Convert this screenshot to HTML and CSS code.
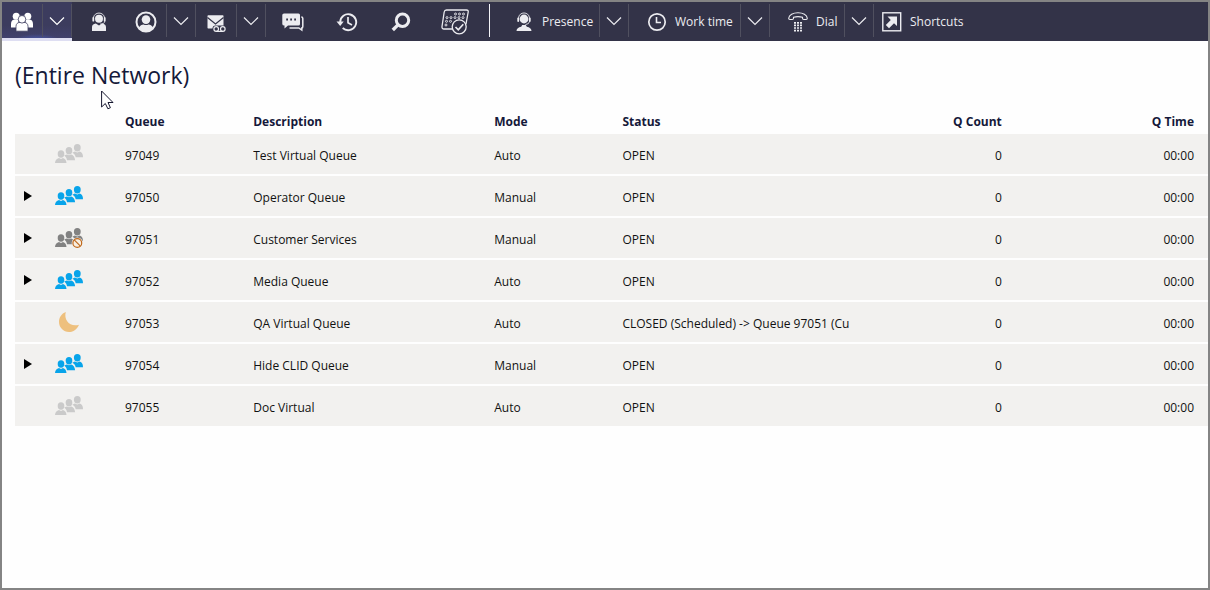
FILE: index.html
```html
<!DOCTYPE html>
<html lang="en">
<head>
<meta charset="utf-8">
<title>Queues</title>
<link rel="stylesheet" href="styles.css">
</head>
<body>
<svg class="sprite" aria-hidden="true">
  <symbol id="chevron" viewBox="0 0 16 10"><path d="M1 1.500L8 8.500L15 1.500" fill="none" stroke="currentColor" stroke-width="1.200"/></symbol>
  <symbol id="group" viewBox="0 0 28 20">
    <g fill="currentColor">
      <ellipse cx="6" cy="10" rx="3.300" ry="3.700"/><path d="M0 19c.1-2.800 1.600-4.300 4-5l2 .9 2-.9c2.200.7 3.300 2.200 3.500 5z"/>
      <ellipse cx="14" cy="6.700" rx="3.300" ry="3.700"/><path d="M9.200 11.500l2.600-1.100 2.200.9 2.200-.9c2.300.8 3.700 2.600 3.900 5.900h-8.100c-.3-2.200-1.200-3.700-2.800-4.800z"/>
      <ellipse cx="22.300" cy="3.700" rx="3.400" ry="3.700"/><path d="M17.300 8.700l2.500-1.200 2.500.9 2.400-.9c2.300.8 3.300 2.500 3.300 5.800h-7.300c-.4-2.100-1.500-3.700-3.400-4.600z"/>
    </g>
  </symbol>
  <symbol id="headset" viewBox="0 0 20 20">
    <g fill="currentColor"><circle cx="10" cy="6.800" r="4"/><path d="M3 19v-3.800c0-2.200 1.300-3.300 3.800-3.700L10 13.500l3.200-2c2.500.4 3.800 1.500 3.800 3.700V19z"/><rect x="3.400" y="5" width="1.800" height="4.600" rx=".9"/><rect x="14.800" y="5" width="1.800" height="4.600" rx=".9"/></g>
    <path d="M4.400 6C5-.6 15-.6 15.600 6v3.500c0 1.800-1.800 2.600-4.400 2.600" fill="none" stroke="currentColor" stroke-width=".9"/>
  </symbol>
</svg>

<div class="app">
  <nav class="toolbar" aria-label="Main">
    <div class="split active">
      <button class="tool narrow" aria-label="Queues"><svg class="icon22" viewBox="0 0 22 20"><g fill="currentColor"><circle cx="5.200" cy="4.200" r="3.500"/><circle cx="16.800" cy="4.200" r="3.500"/><path d="M0 15.500v-3.500C0 9 1.700 7.600 4 7.600h3.500v4L5 15.500zM22 15.500v-3.500c0-3-1.700-4.400-4-4.400h-3.500v4L17 15.500z"/></g><g fill="currentColor" stroke="#3c3c5e" stroke-width=".8"><path d="M5 19.200v-4.800c0-2.600 1.600-4 4-4h4c2.400 0 4 1.400 4 4v4.800z"/><circle cx="11" cy="7.300" r="3.800"/></g></svg></button>
      <button class="drop" aria-label="Queue options"><svg><use href="#chevron"/></svg></button>
    </div>
    <button class="tool" aria-label="Agents"><svg class="icon20"><use href="#headset"/></svg></button>
    <div class="split">
      <button class="tool narrow" aria-label="Contacts"><svg class="icon22" viewBox="0 0 22 22"><circle cx="11" cy="11" r="9.500" fill="none" stroke="currentColor" stroke-width="2"/><circle cx="11" cy="8.600" r="4.300" fill="currentColor"/><path d="M3.500 17c1.500-2.600 3.800-3.600 5-3.500 1.600.8 3.400.8 5 0 1.200-.1 3.500.9 5 3.500-4 4.600-11 4.600-15 0z" fill="currentColor"/></svg></button>
      <button class="drop" aria-label="Contact options"><svg><use href="#chevron"/></svg></button>
    </div>
    <div class="split">
      <button class="tool narrow" aria-label="Messages"><svg class="icon20" viewBox="0 0 20 20"><path d="M1.500 4q0-.7.7-.7h14.600q.7 0 .7.700v12.500H2.200q-.7 0-.7-.7z" fill="currentColor"/><path d="M1.500 5.500L9.500 12l8-6.500" fill="none" stroke="#333348" stroke-width="1.200"/><rect x="6.500" y="13.500" width="13.500" height="6.500" rx="3" fill="#333348"/><g fill="none" stroke="currentColor" stroke-width="1.200"><circle cx="10.200" cy="17" r="2.300"/><circle cx="16.800" cy="17" r="2.300"/><path d="M10 19.400h7"/></g></svg></button>
      <button class="drop" aria-label="Message options"><svg><use href="#chevron"/></svg></button>
    </div>
    <button class="tool" aria-label="Chat"><svg class="icon22" viewBox="0 0 22 20"><path d="M2 1.500h14.500q1.500 0 1.500 1.500v9q0 1.500-1.500 1.500H6L2.500 16.500v-3Q.3 13.500.3 12V3Q.3 1.500 2 1.500z" fill="currentColor"/><path d="M19.300 5q1.500 0 1.500 1.500v8q0 1.500-1 1.500v2l-3-2H7.500" fill="none" stroke="currentColor" stroke-width="1.500"/><path d="M4.200 6.500h1.800v2H4.200zM8.200 6.500H10v2H8.200zM12.200 6.500H14v2h-1.800z" fill="#333348"/></svg></button>
    <button class="tool" aria-label="History"><svg class="icon22" viewBox="0 0 22 22"><path d="M4.200 11a8 8 0 1 1 2.500 6" fill="none" stroke="currentColor" stroke-width="1.900"/><path d="M.5 10.500h7.200L4.200 15z" fill="currentColor"/><path d="M12 6v5.800l4 2.200" fill="none" stroke="currentColor" stroke-width="1.700"/></svg></button>
    <button class="tool" aria-label="Search"><svg class="icon20" viewBox="0 0 20 20"><circle cx="11.500" cy="8.200" r="6.200" fill="none" stroke="currentColor" stroke-width="3"/><path d="M7.200 12.600L1.800 18" stroke="currentColor" stroke-width="3.400"/></svg></button>
    <button class="tool" aria-label="Calendar"><svg class="icon28" viewBox="0 0 28 26"><g fill="none" stroke="currentColor" stroke-width="1.300"><path d="M11 20H3Q.8 20 1 17.500L3.200 3Q3.500 1 5.500 1H25.500Q27.500 1 27.200 3L25 15"/><circle cx="18.200" cy="17.800" r="7"/><path d="M14.500 18l2.800 2.800 5-5.500" stroke-width="1.700"/></g><g fill="none" stroke="currentColor" stroke-width=".9"><circle cx="14.500" cy="5" r="1"/><circle cx="18.500" cy="5" r="1"/><circle cx="22.500" cy="5" r="1"/><circle cx="6" cy="8.600" r="1"/><circle cx="10" cy="8.600" r="1"/><circle cx="14" cy="8.600" r="1"/><circle cx="18" cy="8.600" r="1"/><circle cx="22" cy="8.600" r="1"/><circle cx="5.500" cy="12.300" r="1"/><circle cx="9.500" cy="12.300" r="1"/><circle cx="5" cy="16" r="1"/></g></svg></button>
    <span class="rule"></span>
    <div class="split">
      <button class="tool text presence"><svg class="icon20" viewBox="0 0 20 20"><g fill="currentColor"><circle cx="10" cy="7" r="4.400"/><path d="M2.500 19c.2-2.500 1.800-3.500 4.700-4.200l1-1.800h3.600l1 1.800c2.900.7 4.500 1.700 4.700 4.200z"/><rect x="3.300" y="5.500" width="1.800" height="4.500" rx=".9"/><rect x="14.900" y="5.500" width="1.800" height="4.500" rx=".9"/></g><path d="M4.500 6C5-.7 15-.7 15.500 6v3.500q-.3 2.800-4 3" fill="none" stroke="currentColor" stroke-width=".9"/></svg>Presence</button>
      <button class="drop" aria-label="Presence options"><svg><use href="#chevron"/></svg></button>
    </div>
    <div class="split">
      <button class="tool text work"><svg class="icon20" viewBox="0 0 20 20"><circle cx="10" cy="10" r="8.200" fill="none" stroke="currentColor" stroke-width="1.700"/><path d="M9.500 5v5.500H14" fill="none" stroke="currentColor" stroke-width="1.600"/></svg>Work time</button>
      <button class="drop" aria-label="Work time options"><svg><use href="#chevron"/></svg></button>
    </div>
    <div class="split">
      <button class="tool text dial"><svg class="icon20" viewBox="0 0 20 20"><path d="M.7 6.300C1 3 5 .8 10 .8s9 2.200 9.300 5.500q0 1.200-1.200 1.200h-2.300q-1.300 0-1.300-1.200V5.200Q10 4 5.500 5.200v1.100q0 1.200-1.300 1.200H1.900Q.7 7.500.7 6.300z" fill="none" stroke="currentColor" stroke-width="1.100"/><path d="M6 10.800h2M9 10.800h2M12 10.800h2M6 13.400h2M9 13.400h2M12 13.400h2M6 16h2M9 16h2M12 16h2M6 18.600h2M9 18.600h2M12 18.600h2" stroke="currentColor" stroke-width="1.700"/></svg>Dial</button>
      <button class="drop" aria-label="Dial options"><svg><use href="#chevron"/></svg></button>
    </div>
    <button class="tool text shortcuts"><svg class="icon20" viewBox="0 0 20 20"><rect x=".8" y=".8" width="17.900" height="18" fill="none" stroke="currentColor" stroke-width="1.400"/><path d="M5.500 4.500H15V14l-3-2.800-5 5L3.800 13l5-5z" fill="currentColor"/></svg>Shortcuts</button>
  </nav>

  <main class="content">
    <h1>(Entire Network)</h1>
    <table class="queues">
      <colgroup><col class="c-expand"><col class="c-icon"><col class="c-queue"><col class="c-desc"><col class="c-mode"><col class="c-status"><col class="c-count"><col></colgroup>
      <thead><tr><th></th><th></th><th scope="col">Queue</th><th scope="col">Description</th><th scope="col">Mode</th><th scope="col">Status</th><th scope="col" class="num">Q Count</th><th scope="col" class="num last">Q Time</th></tr></thead>
      <tbody>
        <tr><td></td><td class="state"><svg class="people idle"><use href="#group"/></svg></td><td>97049</td><td>Test Virtual Queue</td><td>Auto</td><td>OPEN</td><td class="num">0</td><td class="num last">00:00</td></tr>
        <tr><td class="state"><button class="expand" aria-label="Expand 97050"></button></td><td class="state"><svg class="people"><use href="#group"/></svg></td><td>97050</td><td>Operator Queue</td><td>Manual</td><td>OPEN</td><td class="num">0</td><td class="num last">00:00</td></tr>
        <tr><td class="state"><button class="expand" aria-label="Expand 97051"></button></td><td class="state"><svg class="people off" viewBox="0 0 28 20"><use href="#group" width="28" height="20"/><circle cx="22.300" cy="15" r="5.600" fill="#f2f1ef"/><g fill="#f8efe2" stroke="#c0691c" stroke-width="1.200"><circle cx="22.300" cy="15" r="4.400"/><path d="M19.200 11.900l6.200 6.200"/></g></svg></td><td>97051</td><td>Customer Services</td><td>Manual</td><td>OPEN</td><td class="num">0</td><td class="num last">00:00</td></tr>
        <tr><td class="state"><button class="expand" aria-label="Expand 97052"></button></td><td class="state"><svg class="people"><use href="#group"/></svg></td><td>97052</td><td>Media Queue</td><td>Auto</td><td>OPEN</td><td class="num">0</td><td class="num last">00:00</td></tr>
        <tr><td></td><td class="state"><svg class="people" viewBox="0 0 28 20"><path d="M10.800 0C8.500 8 15 15.500 24 12.800 21.500 18.500 17.500 20 14 20 8.500 20 4 15.600 4 10 4 5.500 6.500 1.500 10.800 0z" fill="#eec07e"/></svg></td><td>97053</td><td>QA Virtual Queue</td><td>Auto</td><td>CLOSED (Scheduled) -&gt; Queue 97051 (Cu</td><td class="num">0</td><td class="num last">00:00</td></tr>
        <tr><td class="state"><button class="expand" aria-label="Expand 97054"></button></td><td class="state"><svg class="people"><use href="#group"/></svg></td><td>97054</td><td>Hide CLID Queue</td><td>Manual</td><td>OPEN</td><td class="num">0</td><td class="num last">00:00</td></tr>
        <tr><td></td><td class="state"><svg class="people idle"><use href="#group"/></svg></td><td>97055</td><td>Doc Virtual</td><td>Auto</td><td>OPEN</td><td class="num">0</td><td class="num last">00:00</td></tr>
      </tbody>
    </table>
  </main>
  <svg class="pointer" viewBox="0 0 13 20" aria-hidden="true"><path d="M.6 1v16l3.700-3.500 2.600 5.300 2.500-1.100L7 12.500h5z" fill="#fff" stroke="#15162f"/></svg>
</div>
</body>
</html>
```
FILE: styles.css
```css
* { box-sizing: border-box; }

body {
  margin: 0;
  font-family: "Open Sans", "Noto Sans", sans-serif;
  font-size: 12px;
  line-height: 18px;
  color: #111;
}

button {
  margin: 0;
  padding: 0;
  border: 0;
  background: none;
  color: inherit;
  font: inherit;
}

svg { display: block; flex: none; }

.sprite { position: absolute; width: 0; height: 0; }

.app {
  position: relative;
  min-height: 100vh;
  border: 2px solid #848484;
  background: #fefefe;
}

/* Toolbar */
.toolbar {
  display: flex;
  height: 39px;
  background: #333348;
  color: #ececf0;
}

.split { display: flex; }

.tool {
  display: flex;
  align-items: center;
  justify-content: center;
  width: 54px;
}

.narrow { width: 40px; }

.drop {
  display: flex;
  align-items: center;
  justify-content: center;
  width: 30px;
  height: 33px;
  margin-top: 2px;
  border: solid #50505f;
  border-width: 0 1px;
}

.drop svg { width: 16px; height: 10px; }

.active {
  background:
    linear-gradient(#dedef2, #dedef2) bottom / 100% 3px no-repeat,
    radial-gradient(ellipse 24px 7px at 50% 100%, #4a5cb8, transparent),
    linear-gradient(#3c3c5e 60%, #424270);
  color: #fff;
}

.text {
  justify-content: flex-start;
  gap: 8px;
  width: auto;
  padding-left: 18px;
  white-space: nowrap;
}

.presence { min-width: 103px; }
.work { min-width: 111px; }
.dial { min-width: 74px; }
.shortcuts { padding-left: 8px; }

.rule {
  width: 1px;
  height: 33px;
  margin: 2px 6px 0 7px;
  background: #f4f4f8;
}

.icon20 { width: 20px; height: 20px; }
.icon22 { width: 22px; height: 22px; }
.icon28 { width: 28px; height: 26px; }

/* Content */
.content { padding: 20px 0 0 13px; }

h1 {
  margin: 0;
  font-size: 23px;
  font-weight: 400;
  line-height: 28px;
  color: #15193a;
}

.queues {
  width: 100%;
  margin-top: 18px;
  table-layout: fixed;
  border-collapse: separate;
  border-spacing: 0;
}

.c-expand { width: 40px; }
.c-icon { width: 70px; }
.c-queue, .c-mode { width: 10.75%; }
.c-desc { width: 20.2%; }
.c-status { width: 20.1%; }
.c-count { width: 11.7%; }

th, td {
  padding: 0;
  text-align: left;
  white-space: nowrap;
  overflow: hidden;
}

th {
  height: 27px;
  padding-top: 3px;
  font-weight: 700;
  color: #15193a;
}

td {
  height: 42px;
  padding-top: 4px;
  border-bottom: 2px solid #fefefe;
  background: #f2f1ef;
}

.state { padding: 2px 0; }

.num { text-align: right; }
.last { padding-right: 14px; }

.people {
  width: 28px;
  height: 20px;
  color: #08a4ea;
}

.idle { color: #cacaca; }
.off { color: #828282; }

.expand {
  display: block;
  width: 0;
  height: 0;
  margin-left: 9px;
  border: solid transparent;
  border-width: 5px 0 5px 8px;
  border-left-color: #000;
}

.pointer {
  position: absolute;
  left: 99px;
  top: 88px;
  width: 13px;
  height: 20px;
}
```
